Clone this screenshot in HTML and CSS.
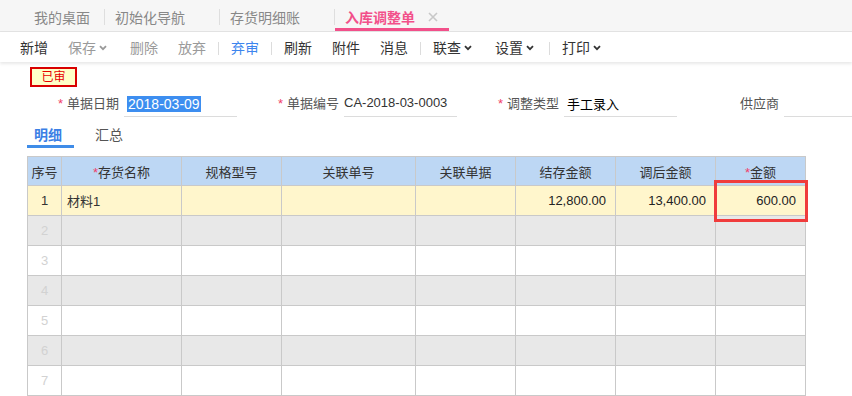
FILE: index.html
```html
<!DOCTYPE html>
<html lang="zh-CN">
<head>
<meta charset="utf-8">
<title>入库调整单</title>
<link rel="stylesheet" href="styles.css">
</head>
<body>
<div class="tabbar">
  <div class="tab tab-first">我的桌面</div>
  <span class="tab-sep"></span>
  <div class="tab">初始化导航</div>
  <span class="tab-sep"></span>
  <div class="tab">存货明细账</div>
  <span class="tab-sep"></span>
  <div class="tab tab-active">入库调整单<svg class="tab-close" width="10" height="10" viewBox="0 0 10 10"><path d="M1 1L9 9M9 1L1 9" stroke="#c8c8c8" stroke-width="1.6" fill="none"/></svg></div>
</div>
<div class="toolbar">
  <span class="btn">新增</span>
  <span class="btn btn-dd disabled">保存<svg class="chev" width="8" height="6" viewBox="0 0 8 6"><path d="M1 1.2L4 4.2L7 1.2" stroke="#999" stroke-width="1.8" fill="none"/></svg></span>
  <span class="btn disabled">删除</span>
  <span class="btn disabled">放弃</span>
  <span class="sep"></span>
  <span class="btn primary">弃审</span>
  <span class="sep"></span>
  <span class="btn">刷新</span>
  <span class="btn">附件</span>
  <span class="btn">消息</span>
  <span class="sep"></span>
  <span class="btn btn-dd">联查<svg class="chev" width="8" height="6" viewBox="0 0 8 6"><path d="M1 1.2L4 4.2L7 1.2" stroke="#333" stroke-width="1.8" fill="none"/></svg></span>
  <span class="btn btn-dd">设置<svg class="chev" width="8" height="6" viewBox="0 0 8 6"><path d="M1 1.2L4 4.2L7 1.2" stroke="#333" stroke-width="1.8" fill="none"/></svg></span>
  <span class="sep"></span>
  <span class="btn btn-dd">打印<svg class="chev" width="8" height="6" viewBox="0 0 8 6"><path d="M1 1.2L4 4.2L7 1.2" stroke="#333" stroke-width="1.8" fill="none"/></svg></span>
</div>
<div class="content">
  <div class="badge">已审</div>
  <div class="form-row">
    <div class="field">
      <label class="label"><span class="req">*</span>单据日期</label>
      <div class="input"><span class="selected">2018-03-09</span></div>
    </div>
    <div class="field">
      <label class="label"><span class="req">*</span>单据编号</label>
      <div class="input input-code">CA-2018-03-0003</div>
    </div>
    <div class="field">
      <label class="label"><span class="req">*</span>调整类型</label>
      <div class="input input-dark">手工录入</div>
    </div>
    <div class="field">
      <label class="label">供应商</label>
      <div class="input"></div>
    </div>
  </div>
  <div class="subtabs">
    <div class="subtab subtab-active">明细</div>
    <div class="subtab subtab-second">汇总</div>
  </div>
  <table class="grid">
    <colgroup>
      <col class="c-no"><col class="c-name"><col class="c-spec"><col class="c-ref"><col class="c-doc"><col class="c-amt"><col class="c-amt"><col class="c-last">
    </colgroup>
    <thead>
      <tr>
        <th>序号</th>
        <th><span class="req-inline">*</span>存货名称</th>
        <th>规格型号</th>
        <th>关联单号</th>
        <th>关联单据</th>
        <th>结存金额</th>
        <th>调后金额</th>
        <th><span class="req-inline">*</span>金额</th>
      </tr>
    </thead>
    <tbody>
      <tr class="row-active">
        <td class="no no-dark">1</td>
        <td class="txt">材料1</td>
        <td></td><td></td><td></td>
        <td class="num">12,800.00</td>
        <td class="num">13,400.00</td>
        <td class="num focus-cell">600.00<div class="focus-box"></div></td>
      </tr>
      <tr class="row-gray"><td class="no">2</td><td></td><td></td><td></td><td></td><td></td><td></td><td></td></tr>
      <tr><td class="no">3</td><td></td><td></td><td></td><td></td><td></td><td></td><td></td></tr>
      <tr class="row-gray"><td class="no">4</td><td></td><td></td><td></td><td></td><td></td><td></td><td></td></tr>
      <tr><td class="no">5</td><td></td><td></td><td></td><td></td><td></td><td></td><td></td></tr>
      <tr class="row-gray"><td class="no">6</td><td></td><td></td><td></td><td></td><td></td><td></td><td></td></tr>
      <tr><td class="no">7</td><td></td><td></td><td></td><td></td><td></td><td></td><td></td></tr>
    </tbody>
  </table>
</div>
</body>
</html>
```

FILE: styles.css
```css
* { box-sizing: border-box; }
html, body { margin: 0; padding: 0; }
body {
  width: 852px;
  height: 396px;
  overflow: hidden;
  background: #fff;
  font-family: "Liberation Sans", "Noto Sans CJK SC", sans-serif;
  color: #333;
}

/* top tabs */
.tabbar {
  display: flex;
  align-items: center;
  height: 32px;
  padding-left: 23px;
  background: #f6f6f6;
  border-bottom: 1px solid #e3e3e3;
}
.tab {
  display: flex;
  align-items: center;
  height: 31px;
  padding: 3px 0 0 10px;
  width: 114px;
  font-size: 14px;
  color: #888;
  white-space: nowrap;
}
.tab-first { width: 81px; padding-left: 11px; }
.tab-sep {
  width: 1px;
  height: 16px;
  margin-top: 2px;
  background: #dedede;
}
.tab-active {
  color: #f2508a;
  font-weight: bold;
  box-shadow: inset 0 -3px 0 #f2508a;
}
.tab-close { margin-left: 13px; }

/* toolbar */
.toolbar {
  position: relative;
  display: flex;
  align-items: center;
  height: 30px;
  padding-left: 10px;
  background: #fff;
  box-shadow: 0 2px 3px rgba(0, 0, 0, 0.09);
}
.btn {
  display: flex;
  align-items: center;
  padding: 0 10px;
  font-size: 14px;
  color: #333;
  white-space: nowrap;
}
.btn-dd { padding-right: 13px; }
.chev { margin-left: 3px; margin-top: 1px; }
.disabled { color: #9a9a9a; }
.primary { color: #3d85ee; }
.sep {
  width: 1px;
  height: 13px;
  margin: 2px 2px 0;
  background: #dcdcdc;
}

/* content */
.badge {
  width: 47px;
  height: 20px;
  margin: 5px 0 0 30px;
  border: 2px solid #d90000;
  background: #ffffc8;
  color: #e60000;
  font-size: 12px;
  line-height: 16px;
  text-align: center;
}
.form-row {
  display: flex;
  height: 24px;
  margin-top: 6px;
  padding-left: 17px;
  overflow: hidden;
}
.field {
  display: flex;
  flex: none;
  width: 220px;
}
.label {
  width: 102px;
  flex: none;
  text-align: right;
  font-size: 13px;
  line-height: 22px;
  color: #555;
  white-space: nowrap;
}
.req {
  color: #f0406a;
  margin-right: 4px;
}
.input {
  flex: none;
  width: 113px;
  height: 24px;
  margin-left: 5px;
  padding: 4px 0 0 3px;
  border-bottom: 1px solid #dcdcdc;
  font-size: 13px;
  line-height: 15px;
  color: #333;
  white-space: nowrap;
}
.input-code { padding-left: 0; padding-top: 2px; }
.input-dark { color: #000; font-size: 13px; }
.selected {
  background: #3d8ef0;
  color: #fff;
  font-size: 14px;
  padding: 0 1px;
}

/* sub tabs */
.subtabs {
  display: flex;
  height: 25px;
  margin: 6px 0 0 27px;
}
.subtab {
  display: flex;
  align-items: center;
  height: 25px;
  padding: 0 0 3px 7px;
  font-size: 14px;
  color: #555;
}
.subtab-active {
  width: 47px;
  color: #3b7fe5;
  font-weight: bold;
  box-shadow: inset 0 -3px 0 #3f8ce8;
}
.subtab-second { padding-left: 21px; }

/* grid */
.grid {
  margin: 8px 0 0 27px;
  border-collapse: collapse;
  table-layout: fixed;
  width: 778px;
  font-size: 13px;
}
.c-no { width: 34px; }
.c-name { width: 120px; }
.c-spec { width: 100px; }
.c-ref { width: 134px; }
.c-doc { width: 100px; }
.c-amt { width: 100px; }
.c-last { width: 90px; }
.grid th, .grid td {
  border: 1px solid #c9c9c9;
  padding: 0;
}
.grid thead tr { height: 29px; }
.grid tbody tr { height: 30px; }
.grid th {
  background: #bdd7f4;
  font-weight: normal;
  color: #333;
  text-align: center;
}
.req-inline { color: #f0406a; }
.row-active td { background: #fff6cc; }
.row-gray td { background: #e8e8e8; }
.no {
  text-align: center;
  color: #d2d2d2;
}
.no-dark { color: #333; }
.txt { padding-left: 5px !important; color: #333; }
.num {
  text-align: right;
  padding-right: 9px !important;
  color: #222;
}
.focus-cell { position: relative; }
.focus-box {
  position: absolute;
  left: -2px;
  top: -6px;
  width: 94px;
  height: 42px;
  border: 3px solid #f03c3c;
}
```
